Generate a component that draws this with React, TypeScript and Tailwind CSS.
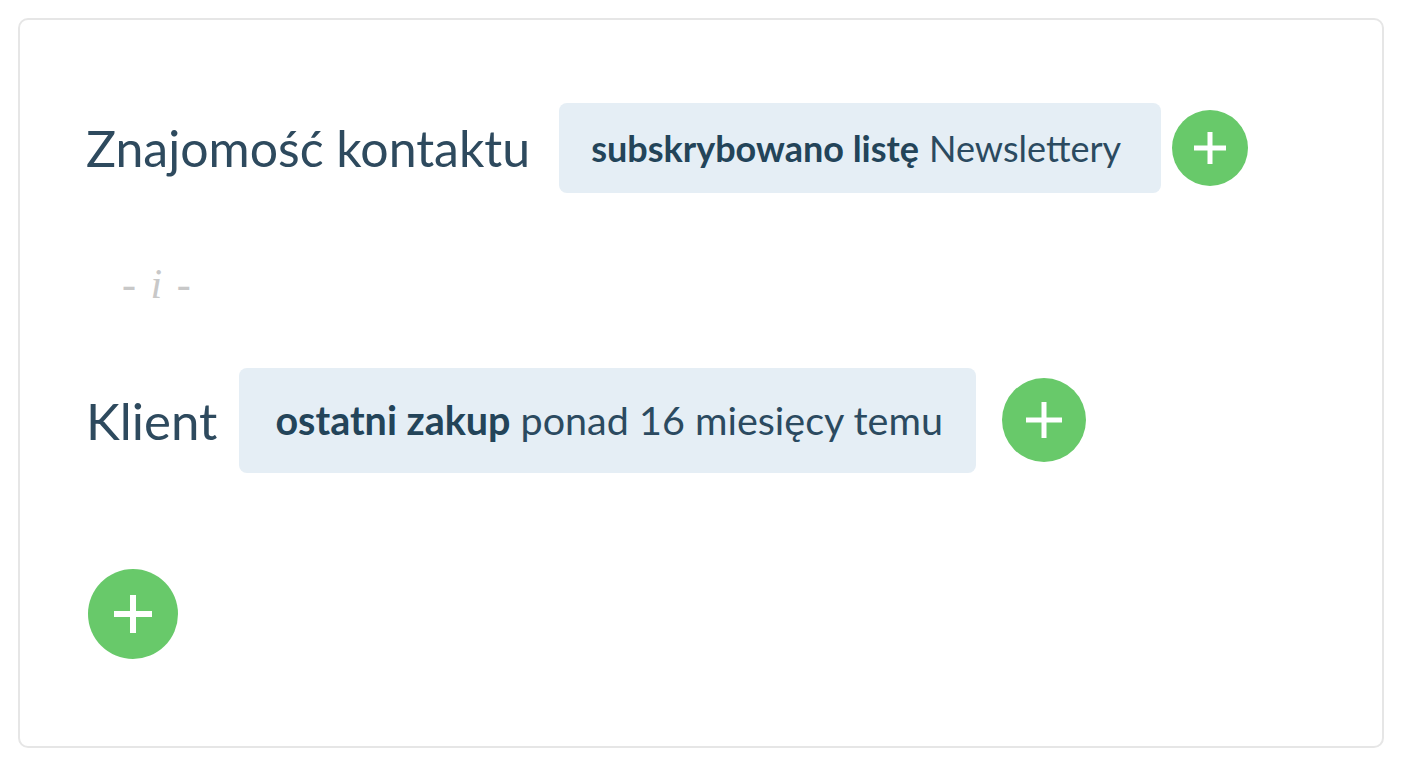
import React from "react";

function PlusButton({ size, arm, stroke }: { size: string; arm: number; stroke: number }) {
  return (
    <div className={`${size} rounded-full bg-[#68c96a] flex items-center justify-center shrink-0`}>
      <svg width={arm} height={arm} viewBox={`0 0 ${arm} ${arm}`}>
        <line x1={arm / 2} y1={0} x2={arm / 2} y2={arm} stroke="white" strokeWidth={stroke} strokeLinecap="round" />
        <line x1={0} y1={arm / 2} x2={arm} y2={arm / 2} stroke="white" strokeWidth={stroke} strokeLinecap="round" />
      </svg>
    </div>
  );
}

export default function App() {
  return (
    <div className="w-[1408px] h-[768px] bg-white p-[18px] pr-[24px] pb-[20px] font-['Lato',sans-serif]">
      <div className="w-full h-full border-2 border-[#e6e6e6] rounded-[10px] pl-[66px] flex flex-col">
        <div className="flex items-center mt-[82px] h-[92px]">
          <span className="text-[50px] text-[#2e4a5e] leading-none">Znajomość kontaktu</span>
          <div className="ml-[29px] h-[90px] w-[602px] bg-[#e5eef5] rounded-[8px] flex items-center pl-[32px] text-[36px] text-[#2b4a60]">
            <span className="font-bold text-[#234459]">subskrybowano listę</span>
            <span className="ml-[10px]">Newslettery</span>
          </div>
          <div className="ml-[11px]">
            <PlusButton size="w-[76px] h-[76px]" arm={32} stroke={5} />
          </div>
        </div>
        <div className="mt-[69px] ml-[36px] font-['Liberation_Serif',serif] italic text-[42px] text-[#c8c8c8] leading-none">
          - <span className="mx-[4px]">i</span> -
        </div>
        <div className="flex items-center mt-[62px] h-[106px]">
          <span className="text-[51px] text-[#2e4a5e] leading-none">Klient</span>
          <div className="ml-[22px] h-[105px] w-[737px] bg-[#e5eef5] rounded-[8px] flex items-center pl-[36px] text-[39.5px] text-[#2b4a60]">
            <span className="font-bold text-[#234459]">ostatni zakup</span>
            <span className="ml-[10px]">ponad 16 miesięcy temu</span>
          </div>
          <div className="ml-[26px]">
            <PlusButton size="w-[84px] h-[84px]" arm={36} stroke={5} />
          </div>
        </div>
        <div className="mt-[96px] ml-[2px]">
          <PlusButton size="w-[90px] h-[90px]" arm={38} stroke={6} />
        </div>
      </div>
    </div>
  );
}
